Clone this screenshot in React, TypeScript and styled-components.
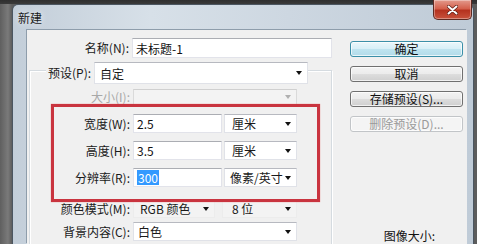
import styled, { createGlobalStyle } from 'styled-components';

const GlobalStyle = createGlobalStyle`
  html, body {
    margin: 0;
    padding: 0;
    height: 100%;
    overflow: hidden;
  }
  body {
    background: linear-gradient(90deg, #5f5f5f 0, #7a7a7a 8px, #5c5c5c 12px);
    font-family: "Noto Sans CJK SC", "Noto Sans", sans-serif;
    font-size: 12px;
    color: #111;
  }
`;

const Desktop = styled.div`
  height: 244px;
  padding: 4px 0 0 12px;
  box-sizing: border-box;
  background: linear-gradient(#2f2f2f 0, #3a3a3a 4px, transparent 4px);
`;

const Window = styled.div`
  width: 462px;
  height: 240px;
  box-sizing: border-box;
  border: 1px solid #4b5661;
  border-bottom: none;
  border-radius: 6px 6px 0 0;
  background: linear-gradient(90deg, #c3ced9 0%, #d7e0e8 30%, #cdd7e1 60%, #bfcbd7 100%);
  display: flex;
  flex-direction: column;
`;

const TitleBar = styled.div`
  position: relative;
  height: 25px;
  display: flex;
  align-items: center;
  padding-left: 5px;
  flex-shrink: 0;
`;

const Title = styled.span`
  font-size: 12px;
  color: #1a1a1a;
  text-shadow: 0 0 6px rgba(255, 255, 255, 0.9);
`;

const CloseButton = styled.div`
  position: absolute;
  top: -5px;
  right: 1px;
  width: 39px;
  height: 20px;
  box-sizing: border-box;
  border: 1px solid #5e2a22;
  border-top: none;
  border-radius: 0 0 5px 5px;
  background: linear-gradient(#e39a8c 0%, #d4604c 45%, #b5321f 55%, #c8523c 100%);
  box-shadow: inset 0 0 0 1px rgba(255, 255, 255, 0.35);
  display: flex;
  align-items: center;
  justify-content: center;
`;

const Frame = styled.div`
  flex: 1;
  display: flex;
  padding: 0 6px 0 14px;
  min-height: 0;
`;

const Content = styled.div`
  flex: 1;
  display: flex;
  align-items: flex-start;
  background: #f0f0f0;
  box-shadow: -1px -1px 0 #8e9dab;
  overflow: hidden;
`;

const FormColumn = styled.div`
  width: 305px;
  padding-top: 8px;
  flex-shrink: 0;
`;

const Row = styled.div<{ $mt?: number }>`
  display: flex;
  align-items: center;
  margin-top: ${(p) => p.$mt ?? 0}px;
`;

const Label = styled.span<{ $w?: number; $disabled?: boolean }>`
  width: ${(p) => (p.$w ? `${p.$w}px` : 'auto')};
  margin-right: 3px;
  text-align: right;
  white-space: nowrap;
  line-height: 14px;
  color: ${(p) => (p.$disabled ? '#a8a8a8' : '#1a1a1a')};
`;

const TextBox = styled.div<{ $w: number; $h?: number }>`
  width: ${(p) => p.$w}px;
  height: ${(p) => p.$h ?? 19}px;
  box-sizing: border-box;
  background: #fff;
  border: 1px solid #e2e3ea;
  border-top-color: #abadb3;
  display: flex;
  align-items: center;
  padding-left: 3px;
  white-space: nowrap;
`;

const Selected = styled.span`
  background: #3399ff;
  color: #fff;
  padding: 0 1px;
  line-height: 15px;
`;

const Select = styled.div<{ $w: number; $h?: number; $pad?: number; $disabled?: boolean; $flat?: boolean }>`
  position: relative;
  width: ${(p) => p.$w}px;
  height: ${(p) => p.$h ?? 19}px;
  box-sizing: border-box;
  background: ${(p) => (p.$disabled ? '#f3f3f3' : p.$flat ? '#f3f3f3' : '#fff')};
  border: 1px solid ${(p) => (p.$disabled ? '#dadada' : p.$flat ? '#ececec' : '#e0e2e8')};
  border-top-color: ${(p) => (p.$disabled ? '#d0d0d0' : p.$flat ? '#e4e4e4' : '#b7b9c0')};
  display: flex;
  align-items: center;
  padding-left: ${(p) => p.$pad ?? 4}px;
  white-space: nowrap;
  color: ${(p) => (p.$disabled ? '#a8a8a8' : '#1a1a1a')};

  &::after {
    content: '';
    position: absolute;
    right: 5px;
    top: 50%;
    margin-top: -2px;
    border-left: 3.5px solid transparent;
    border-right: 3.5px solid transparent;
    border-top: 4px solid ${(p) => (p.$disabled ? '#b0b0b0' : '#111')};
  }
`;

const GroupBox = styled.div`
  position: relative;
  margin: 12px 0 0 2px;
  width: 303px;
  height: 260px;
  box-sizing: border-box;
  border: 1px solid #d5dbe0;
  box-shadow: inset 1px 1px 0 #fff, 1px 1px 0 #fff;
`;

const Legend = styled.div`
  display: flex;
  align-items: center;
  width: fit-content;
  margin: -9px 0 0 16px;
  padding-left: 2px;
  background: #f0f0f0;
`;

const RedMark = styled.div`
  position: absolute;
  left: 21px;
  top: 33px;
  width: 269px;
  height: 98px;
  box-sizing: border-box;
  border: 3px solid #c9343f;
  box-shadow: 0 0 1px #e77;
  pointer-events: none;
`;

const ButtonColumn = styled.div`
  margin-left: 18px;
  padding-top: 11px;
  width: 113px;
  display: flex;
  flex-direction: column;
  gap: 9px;
`;

const Button = styled.div<{ $default?: boolean; $disabled?: boolean }>`
  height: 16px;
  box-sizing: border-box;
  border: 1px solid ${(p) => (p.$default ? '#3b8fa8' : p.$disabled ? '#c2c5c8' : '#707070')};
  border-radius: 3px;
  background: ${(p) =>
    p.$default
      ? 'linear-gradient(#eaf7fb 0%, #d7eff7 50%, #bfe4f0 51%, #b2dbe9 100%)'
      : p.$disabled
      ? '#f4f4f4'
      : 'linear-gradient(#f3f3f3 0%, #ebebeb 50%, #dddddd 51%, #cfcfcf 100%)'};
  box-shadow: inset 0 0 0 1px rgba(255, 255, 255, 0.7);
  color: ${(p) => (p.$disabled ? '#9a9a9a' : '#111')};
  display: flex;
  align-items: center;
  justify-content: center;
  line-height: 14px;
  white-space: nowrap;
`;

const Caption = styled.div`
  margin-top: 88px;
  text-align: center;
  line-height: 14px;
  padding-left: 6px;
`;

export default function App() {
  return (
    <>
      <GlobalStyle />
      <Desktop>
        <Window>
          <TitleBar>
            <Title>新建</Title>
            <CloseButton>
              <svg width="11" height="10" viewBox="0 0 11 10">
                <path d="M1.5 1.5 L9.5 8.5 M9.5 1.5 L1.5 8.5" stroke="#5a1a12" strokeWidth="3.4" strokeLinecap="round" />
                <path d="M1.5 1.5 L9.5 8.5 M9.5 1.5 L1.5 8.5" stroke="#fff" strokeWidth="2" strokeLinecap="round" />
              </svg>
            </CloseButton>
          </TitleBar>
          <Frame>
            <Content>
              <FormColumn>
                <Row>
                  <Label $w={103}>名称(N):</Label>
                  <TextBox $w={202} $h={20}>未标题-1</TextBox>
                </Row>
                <GroupBox>
                  <Legend>
                    <Label>预设(P):</Label>
                    <Select $w={214} $h={22} $pad={5}>自定</Select>
                  </Legend>
                  <Row $mt={5}>
                    <Label $w={100} $disabled>大小(I):</Label>
                    <Select $w={164} $h={16} $disabled />
                  </Row>
                  <Row $mt={9}>
                    <Label $w={100}>宽度(W):</Label>
                    <TextBox $w={89}>2.5</TextBox>
                    <Select $w={73} $pad={7} style={{ marginLeft: 2 }}>厘米</Select>
                  </Row>
                  <Row $mt={8}>
                    <Label $w={100}>高度(H):</Label>
                    <TextBox $w={89}>3.5</TextBox>
                    <Select $w={73} $pad={7} style={{ marginLeft: 2 }}>厘米</Select>
                  </Row>
                  <Row $mt={8}>
                    <Label $w={100}>分辨率(R):</Label>
                    <TextBox $w={89}>
                      <Selected>300</Selected>
                    </TextBox>
                    <Select $w={73} $pad={5} style={{ marginLeft: 2 }}>像素/英寸</Select>
                  </Row>
                  <Row $mt={12}>
                    <Label $w={100}>颜色模式(M):</Label>
                    <Select $w={82} $pad={6} $flat>RGB 颜色</Select>
                    <Select $w={75} $pad={9} $flat style={{ marginLeft: 7 }}>8 位</Select>
                  </Row>
                  <Row $mt={4}>
                    <Label $w={100}>背景内容(C):</Label>
                    <Select $w={164} $pad={4}>白色</Select>
                  </Row>
                  <RedMark />
                </GroupBox>
              </FormColumn>
              <ButtonColumn>
                <Button $default>确定</Button>
                <Button>取消</Button>
                <Button>存储预设(S)...</Button>
                <Button $disabled>删除预设(D)...</Button>
                <Caption>图像大小:</Caption>
              </ButtonColumn>
            </Content>
          </Frame>
        </Window>
      </Desktop>
    </>
  );
}
